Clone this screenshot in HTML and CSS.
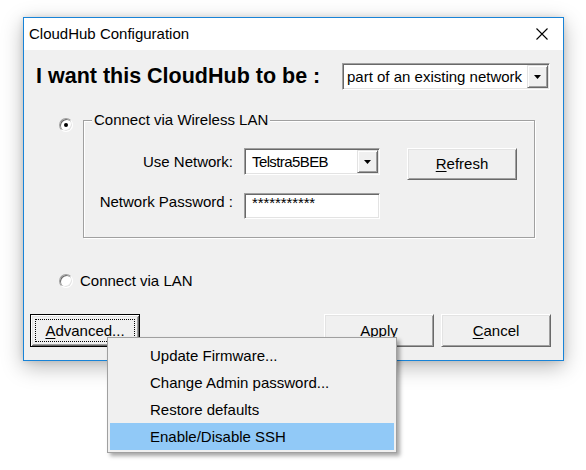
FILE: index.html
```html
<!DOCTYPE html>
<html lang="en">
<head>
<meta charset="utf-8">
<title>CloudHub Configuration</title>
<link rel="stylesheet" href="styles.css">
</head>
<body>
<div class="stage">
  <div class="window">
    <div class="titlebar">
      <span class="title">CloudHub Configuration</span>
      <svg class="close" width="12" height="12" viewBox="0 0 12 12" aria-hidden="true">
        <path d="M0.5 0.5 L11.5 11.5 M11.5 0.5 L0.5 11.5" stroke="#000" stroke-width="1.1" fill="none"/>
      </svg>
    </div>
    <div class="content">
      <div class="mode-row">
        <h1 class="mode-label">I want this CloudHub to be :</h1>
        <div class="combo combo-mode">
          <span class="combo-text">part of an existing network</span>
          <span class="combo-btn"><svg width="7" height="4" viewBox="0 0 7 4"><path d="M0 0 H7 L3.5 4 Z" fill="#000"/></svg></span>
        </div>
      </div>

      <div class="wlan-row">
        <span class="radio checked"></span>
        <fieldset class="group">
          <legend>Connect via Wireless LAN</legend>
          <div class="field-row">
            <span class="field-label">Use Network:</span>
            <div class="combo combo-net">
              <span class="combo-text net-text">Telstra5BEB</span>
              <span class="combo-btn"><svg width="7" height="4" viewBox="0 0 7 4"><path d="M0 0 H7 L3.5 4 Z" fill="#000"/></svg></span>
            </div>
            <button class="btn btn-refresh"><u>R</u>efresh</button>
          </div>
          <div class="field-row field-row-2">
            <span class="field-label label-top">Network Password :</span>
            <div class="textbox"><span class="stars">***********</span></div>
          </div>
        </fieldset>
      </div>

      <div class="lan-row">
        <span class="radio"></span>
        <span class="lan-text">Connect via LAN</span>
      </div>

      <div class="button-row">
        <button class="btn btn-default"><span class="focus-rect"><u>A</u>dvanced...</span></button>
        <span class="spacer"></span>
        <button class="btn">Apply</button>
        <button class="btn btn-cancel"><u>C</u>ancel</button>
      </div>
    </div>
  </div>

  <div class="menu">
    <div class="menu-item">Update Firmware...</div>
    <div class="menu-item">Change Admin password...</div>
    <div class="menu-item">Restore defaults</div>
    <div class="menu-item active">Enable/Disable SSH</div>
  </div>
</div>
</body>
</html>
```

FILE: styles.css
```css
html, body {
  margin: 0;
  padding: 0;
  background: #ffffff;
}

body {
  font-family: "Liberation Sans", Arial, sans-serif;
  font-size: 15px;
  color: #000;
}

.stage {
  position: relative;
  width: 586px;
  height: 470px;
  overflow: hidden;
  box-sizing: border-box;
  padding: 17px 0 0 23px;
}

.window {
  width: 541px;
  height: 344px;
  box-sizing: border-box;
  border: 1px solid #1883d7;
  background: #f0f0f0;
  box-shadow: 0 6px 20px rgba(0, 0, 0, 0.28), 0 0 6px rgba(0, 0, 0, 0.12);
  display: flex;
  flex-direction: column;
}

.titlebar {
  height: 32px;
  background: #fff;
  display: flex;
  align-items: center;
  padding-left: 5px;
  flex: none;
}

.title {
  flex: 1;
  line-height: 18px;
}

.close {
  margin-right: 15px;
  display: block;
}

.content {
  flex: 1;
  display: flex;
  flex-direction: column;
}

/* mode row */
.mode-row {
  margin-top: 13px;
  height: 27px;
  display: flex;
  align-items: center;
}

.mode-label {
  margin: 0 0 0 12px;
  font-size: 21.5px;
  font-weight: bold;
  line-height: 27px;
  flex: 1;
}

/* sunken combo box */
.combo {
  position: relative;
  box-sizing: border-box;
  background: #fff;
  border: 1px solid;
  border-color: #a0a0a0 #fff #fff #a0a0a0;
  box-shadow: inset 1px 1px 0 #696969, inset -1px -1px 0 #e3e3e3;
  display: flex;
  align-items: center;
}

.combo-mode {
  width: 208px;
  height: 27px;
  margin-right: 13px;
}

.combo-text {
  flex: 1;
  padding-left: 4px;
  white-space: nowrap;
  overflow: hidden;
}

.combo-btn {
  align-self: stretch;
  margin: 1px 1px 1px 0;
  width: 21px;
  box-sizing: border-box;
  background: #f0f0f0;
  border: 1px solid;
  border-color: #e3e3e3 #696969 #696969 #e3e3e3;
  box-shadow: inset 1px 1px 0 #fff, inset -1px -1px 0 #a0a0a0;
  display: flex;
  align-items: center;
  justify-content: center;
}

.combo-btn svg {
  display: block;
}

/* wireless section */
.wlan-row {
  margin-top: 21px;
  display: flex;
  align-items: flex-start;
}

.radio {
  position: relative;
  flex: none;
  width: 12px;
  height: 12px;
  border-radius: 50%;
  background: #fff;
  border: 1px solid;
  border-color: #a0a0a0 #fff #fff #a0a0a0;
  box-shadow: inset 1px 1px 0 #696969, inset -1px -1px 0 #e3e3e3;
}

.radio.checked::after {
  content: "";
  position: absolute;
  left: 4px;
  top: 4px;
  width: 4px;
  height: 4px;
  border-radius: 50%;
  background: #000;
}

.wlan-row .radio {
  margin: 7px 0 0 35px;
}

.group {
  margin: 0 0 0 10px;
  width: 452px;
  box-sizing: border-box;
  border: 1px solid #a0a0a0;
  box-shadow: inset 1px 1px 0 #fff, 1px 1px 0 #fff;
  padding: 19px 0 18px 8px;
  min-width: 0;
}

.group legend {
  padding: 0 2px;
  line-height: 18px;
  background: #f0f0f0;
}

.field-row {
  display: flex;
  align-items: flex-start;
}

.field-row-2 {
  margin-top: 13px;
}

.field-label {
  width: 141px;
  margin-right: 11px;
  text-align: right;
  line-height: 27px;
  white-space: nowrap;
}

.label-top {
  line-height: 18px;
}

.combo-net {
  width: 136px;
  height: 27px;
}

.net-text {
  padding-left: 7px;
  letter-spacing: -0.6px;
}

.textbox {
  width: 136px;
  height: 26px;
  box-sizing: border-box;
  background: #fff;
  border: 1px solid;
  border-color: #a0a0a0 #fff #fff #a0a0a0;
  box-shadow: inset 1px 1px 0 #696969, inset -1px -1px 0 #e3e3e3;
  padding-left: 7px;
}

.stars {
  font-size: 15px;
  line-height: 18px;
  letter-spacing: -0.1px;
}

/* buttons */
.btn {
  font: inherit;
  color: #000;
  width: 110px;
  height: 33px;
  padding: 0;
  box-sizing: border-box;
  background: #f0f0f0;
  border: 1px solid;
  border-color: #fff #696969 #696969 #fff;
  box-shadow: inset 1px 1px 0 #e3e3e3, inset -1px -1px 0 #a0a0a0;
  display: flex;
  align-items: center;
  justify-content: center;
  line-height: 18px;
  flex: none;
}

.btn u {
  text-underline-offset: 2px;
}

.btn-refresh {
  margin-left: 27px;
  height: 32px;
}

.lan-row {
  margin-top: 34px;
  display: flex;
  align-items: center;
  line-height: 18px;
}

.lan-row .radio {
  margin-left: 35px;
}

.lan-text {
  margin-left: 7px;
}

.button-row {
  margin-top: 24px;
  display: flex;
  align-items: flex-start;
}

.btn-default {
  margin-left: 6px;
  border: 1px solid #000;
  box-shadow: inset 1px 1px 0 #fff, inset -1px -1px 0 #696969, inset 2px 2px 0 #e3e3e3, inset -2px -2px 0 #a0a0a0;
  padding: 4px;
}

.focus-rect {
  flex: 1;
  align-self: stretch;
  display: flex;
  align-items: center;
  justify-content: center;
  border: 1px dotted #000;
}

.spacer {
  flex: 1;
}

.btn-cancel {
  margin-left: 7px;
  margin-right: 12px;
}

/* popup menu */
.menu {
  position: absolute;
  left: 107px;
  top: 337px;
  width: 290px;
  box-sizing: border-box;
  background: #f0f0f0;
  border: 1px solid #a0a0a0;
  padding: 4px 2px 2px;
  box-shadow: 3px 3px 4px rgba(0, 0, 0, 0.35);
}

.menu-item {
  height: 27px;
  line-height: 27px;
  padding-left: 40px;
  white-space: nowrap;
}

.menu-item.active {
  background: #91c9f7;
}
```
